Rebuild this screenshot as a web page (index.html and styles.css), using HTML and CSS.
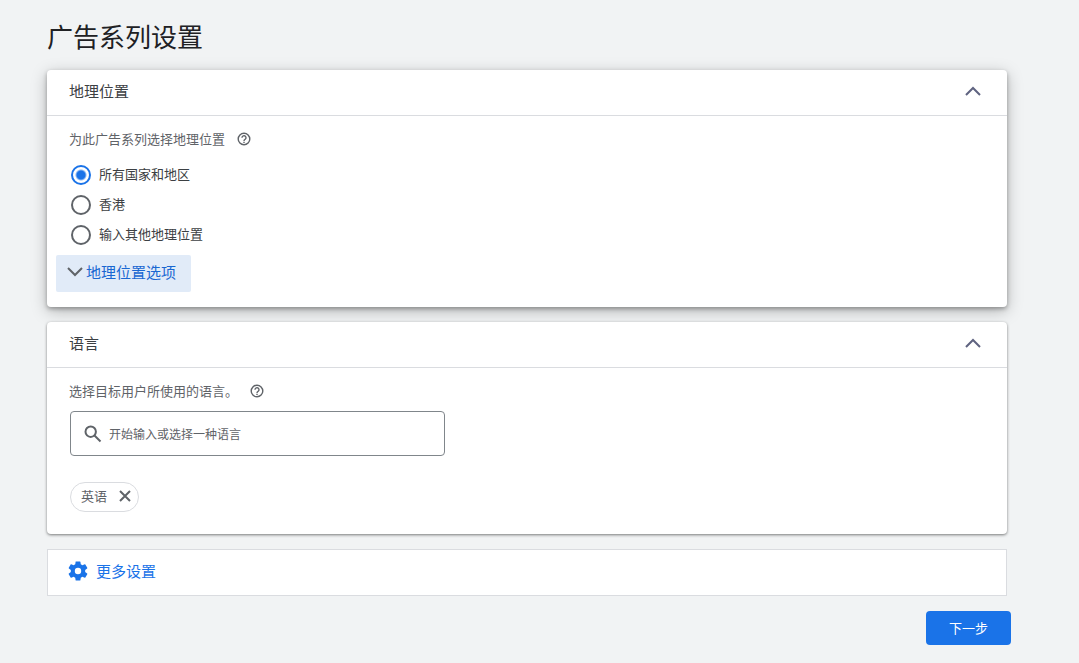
FILE: index.html
```html
<!DOCTYPE html>
<html lang="zh-CN">

<head>
    <meta charset="UTF-8">
    <meta name="viewport" content="width=device-width, initial-scale=1.0">
    <title>广告系列设置</title>
    <link rel="stylesheet" href="styles.css">
</head>

<body>

    <main class="page">
        <h1>广告系列设置</h1>

        <section class="card card-active">
            <header class="card-header">
                <h2>地理位置</h2>
                <button type="button" class="toggle" aria-label="收起地理位置">
                    <svg width="16" height="10" viewBox="0 0 16 10"><path d="M1 9l7-7 7 7" /></svg>
                </button>
            </header>
            <div class="card-body">
                <div class="hint">
                    <span>为此广告系列选择地理位置</span>
                    <svg class="help" width="14" height="14" viewBox="0 0 14 14">
                        <circle cx="7" cy="7" r="5.8" />
                        <path d="M5 5.7a2 2 0 1 1 3.2 1.6C7.4 7.9 7 8.2 7 8.9M7 9.8v1.3" />
                    </svg>
                </div>
                <form class="locations">
                    <label class="radio"><input type="radio" name="location" value="all" checked><span>所有国家和地区</span></label>
                    <label class="radio"><input type="radio" name="location" value="hk"><span>香港</span></label>
                    <label class="radio"><input type="radio" name="location" value="other"><span>输入其他地理位置</span></label>
                </form>
                <button type="button" class="options">
                    <svg width="16" height="10" viewBox="0 0 16 10"><path d="M1 1l7 7 7-7" /></svg>
                    <span>地理位置选项</span>
                </button>
            </div>
        </section>

        <section class="card">
            <header class="card-header">
                <h2>语言</h2>
                <button type="button" class="toggle" aria-label="收起语言">
                    <svg width="16" height="10" viewBox="0 0 16 10"><path d="M1 9l7-7 7 7" /></svg>
                </button>
            </header>
            <div class="card-body">
                <div class="hint">
                    <label for="language">选择目标用户所使用的语言。</label>
                    <svg class="help" width="14" height="14" viewBox="0 0 14 14">
                        <circle cx="7" cy="7" r="5.8" />
                        <path d="M5 5.7a2 2 0 1 1 3.2 1.6C7.4 7.9 7 8.2 7 8.9M7 9.8v1.3" />
                    </svg>
                </div>
                <div class="search">
                    <svg width="18" height="18" viewBox="0 0 18 18">
                        <circle cx="6.7" cy="6.7" r="5.2" />
                        <path d="M10.5 10.5l6 6" />
                    </svg>
                    <input type="text" id="language" name="language" placeholder="开始输入或选择一种语言">
                </div>
                <div class="chip">
                    <span>英语</span>
                    <button type="button" aria-label="移除英语">
                        <svg width="12" height="12" viewBox="0 0 12 12"><path d="M1 1l10 10M11 1L1 11" /></svg>
                    </button>
                </div>
            </div>
        </section>

        <button type="button" class="more">
            <svg width="24" height="24" viewBox="0 0 24 24">
                <path d="M19.14 12.94c.04-.3.06-.61.06-.94 0-.32-.02-.64-.07-.94l2.03-1.58a.49.49 0 0 0 .12-.61l-1.92-3.32a.488.488 0 0 0-.59-.22l-2.39.96c-.5-.38-1.03-.7-1.62-.94l-.36-2.54a.484.484 0 0 0-.48-.41h-3.84c-.24 0-.43.17-.47.41l-.36 2.54c-.59.24-1.13.57-1.62.94l-2.39-.96c-.22-.08-.47 0-.59.22L2.74 8.87c-.12.21-.08.47.12.61l2.03 1.58c-.05.3-.09.63-.09.94s.02.64.07.94l-2.03 1.58a.49.49 0 0 0-.12.61l1.92 3.32c.12.22.37.29.59.22l2.39-.96c.5.38 1.03.7 1.62.94l.36 2.54c.05.24.24.41.48.41h3.84c.24 0 .44-.17.47-.41l.36-2.54c.59-.24 1.13-.56 1.62-.94l2.39.96c.22.08.47 0 .59-.22l1.92-3.32c.12-.22.07-.47-.12-.61l-2.01-1.58zM12 15.2a3.2 3.2 0 1 1 0-6.4 3.2 3.2 0 0 1 0 6.4z" />
            </svg>
            <span>更多设置</span>
        </button>
    </main>

    <footer class="actions">
        <button type="submit" class="next">下一步</button>
    </footer>

</body>

</html>
```

FILE: styles.css
```css
* {
    box-sizing: border-box;
}

body {
    font-family: "Noto Sans CJK SC", sans-serif;
    font-size: 13px;
    line-height: 20px;
    color: #3c4043;
    background-color: #f1f3f4;
    margin: 0;
    padding: 17px 68px 18px 47px;
}

button,
input {
    font-family: inherit;
    font-size: inherit;
    line-height: inherit;
    color: inherit;
    margin: 0;
}

button {
    padding: 0;
    border: none;
    background: none;
    cursor: pointer;
}

svg {
    display: block;
    flex: none;
    fill: none;
    stroke: #5f6368;
    stroke-width: 2;
}

h1 {
    margin: 0 0 15px;
    font-size: 26px;
    line-height: 38px;
    font-weight: 400;
    color: #202124;
}

h2 {
    margin: 0;
    font-size: 15px;
    line-height: 20px;
    font-weight: 400;
}

.page {
    margin-right: 4px;
}

.card {
    margin-bottom: 15px;
    background-color: #fff;
    border-radius: 4px;
    box-shadow: 0 1px 3px rgba(0, 0, 0, 0.5);
}

.card-active {
    box-shadow: 0 2px 4px rgba(0, 0, 0, 0.3), 0 4px 16px rgba(0, 0, 0, 0.25);
}

.card-header {
    display: flex;
    align-items: center;
    justify-content: space-between;
    padding: 11px 26px 14px 22px;
    border-bottom: 1px solid #dadce0;
}

.card-body {
    padding: 13px 22px 15px;
}

.toggle svg {
    stroke: #5f6380;
}

.hint {
    display: flex;
    align-items: center;
    gap: 12px;
    color: #5f6368;
}

.help {
    stroke-width: 1.4;
}

.locations {
    margin-top: 11px;
}

.radio {
    display: flex;
    align-items: center;
    gap: 8px;
    height: 30px;
}

.radio span {
    padding-bottom: 2px;
}

.radio input {
    appearance: none;
    width: 20px;
    height: 20px;
    margin-left: 2px;
    border: 2px solid #5f6368;
    border-radius: 50%;
}

.radio input:checked {
    border-color: #1a73e8;
    background: radial-gradient(circle, #1a73e8 4px, #fff 6px);
}

.options {
    display: flex;
    align-items: center;
    gap: 3px;
    height: 37px;
    margin: 5px 0 0 -13px;
    padding: 0 15px 3px 11px;
    border-radius: 2px;
    background-color: #e1ebf8;
    font-size: 15px;
    color: #1967d2;
}

.search {
    display: flex;
    align-items: center;
    gap: 7px;
    width: 375px;
    max-width: 100%;
    height: 45px;
    margin: 10px 0 26px 1px;
    padding: 0 13px;
    border: 1px solid #80868b;
    border-radius: 4px;
}

.search input {
    flex: 1;
    min-width: 0;
    padding: 0;
    border: none;
    outline: none;
    background: none;
    font-size: 12px;
}

.search input::placeholder {
    color: #5f6368;
    opacity: 1;
}

.chip {
    display: inline-flex;
    align-items: center;
    gap: 12px;
    height: 30px;
    margin: 0 0 7px 1px;
    padding: 0 7px 3px 10px;
    border: 1px solid #dadce0;
    border-radius: 15px;
    color: #5f6368;
    vertical-align: top;
}

.more {
    display: flex;
    align-items: center;
    gap: 6px;
    width: 100%;
    height: 47px;
    padding: 0 18px 3px;
    border: 1px solid #dadce0;
    background-color: #fff;
    font-size: 15px;
    color: #1a73e8;
}

.more svg {
    fill: #1a73e8;
    stroke: none;
}

.actions {
    display: flex;
    justify-content: flex-end;
    margin-top: 15px;
}

.next {
    width: 85px;
    height: 34px;
    border-radius: 4px;
    background-color: #1a73e8;
    color: #fff;
}
```
